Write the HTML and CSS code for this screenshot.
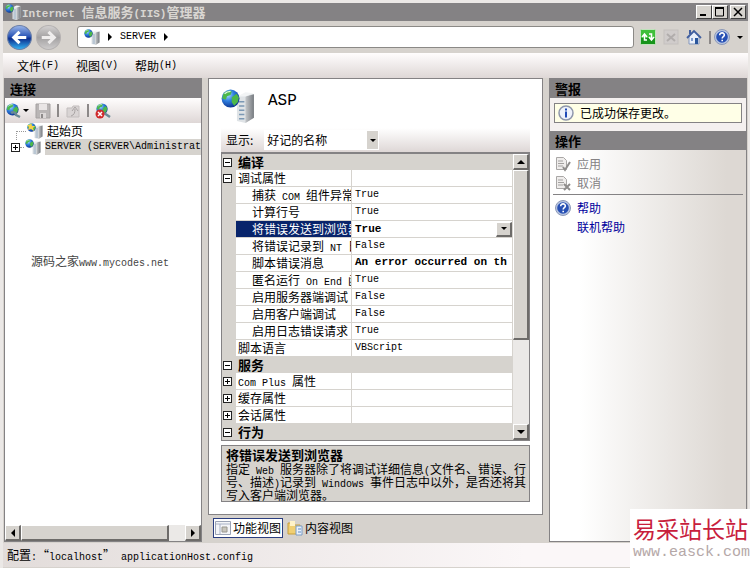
FILE: index.html
```html
<!DOCTYPE html>
<html lang="zh-CN">
<head>
  <meta charset="UTF-8" />
  <title>Internet 信息服务(IIS)管理器</title>
  <link rel="stylesheet" href="styles.css">
</head>
<body>
  <!-- 公用图标 -->
  <svg class="defs" width="0" height="0" aria-hidden="true">
    <defs>
      <radialGradient id="gGlobe" cx="35%" cy="30%" r="75%">
        <stop offset="0" stop-color="#a8ddff"/><stop offset=".45" stop-color="#2f7fe0"/><stop offset="1" stop-color="#0a2f8c"/>
      </radialGradient>
      <linearGradient id="gBlue" x1="0" y1="0" x2="0" y2="1">
        <stop offset="0" stop-color="#9db8ea"/><stop offset=".45" stop-color="#2c57b8"/><stop offset=".55" stop-color="#0d2f8e"/><stop offset="1" stop-color="#35b6f5"/>
      </linearGradient>
      <linearGradient id="gGray" x1="0" y1="0" x2="0" y2="1">
        <stop offset="0" stop-color="#d4d2d2"/><stop offset=".5" stop-color="#a3a1a2"/><stop offset="1" stop-color="#cfcdcd"/>
      </linearGradient>
      <linearGradient id="gSide" x1="0" y1="0" x2="1" y2="0">
        <stop offset="0" stop-color="#c4c7ca"/><stop offset="1" stop-color="#777b80"/>
      </linearGradient>
    </defs>
    <symbol id="globe" viewBox="0 0 16 16">
      <circle cx="8" cy="8" r="7.5" fill="url(#gGlobe)"/>
      <path d="M2 4C4 1 8 1 9 2L8 5 5 6 4 9 1 8zM9 7l4-3 2 3-1 4-3 3-2-3z" fill="#4cb84a"/>
      <path d="M3 4c2-2 4-2 5-2" stroke="#dff6e6" fill="none"/>
    </symbol>
    <symbol id="server" viewBox="0 0 32 32">
      <path d="M15 8l8-4 8 1v22l-8 5-8-2z" fill="#dfe3e6"/>
      <path d="M23 7l8-2v22l-8 5z" fill="url(#gSide)"/>
      <path d="M15 7l8-4 8 1-8 3z" fill="#f2f4f5"/>
      <path d="M17 12h5M17 16h5M17 20h5M17 24h5M17 28h5" stroke="#7b98b4" stroke-width="1.5"/>
      <use href="#globe" x="0" y="0" width="18" height="18"/>
    </symbol>
    <symbol id="help" viewBox="0 0 16 16">
      <circle cx="8" cy="8" r="7.5" fill="#b9c6e2" stroke="#8b98b8"/>
      <circle cx="8" cy="8" r="5.8" fill="#2750b4"/>
      <path d="M5.7 6.2C5.7 3 10.6 3.3 10.3 6.2 10.2 7.6 8.2 7.7 8.2 9.4M8.2 10.8v1.5" stroke="#fff" stroke-width="1.6" fill="none"/>
    </symbol>
    <symbol id="sheet" viewBox="0 0 16 16">
      <path d="M1.5 1.5h7l3 3v9h-10z" fill="#efedec" stroke="#a9a7a6"/>
      <path d="M3 5h5M3 7.5h6M3 10h5" stroke="#a3a1a0"/>
    </symbol>
  </svg>

  <div class="window">
    <header class="titlebar">
      <svg class="icon16"><use href="#server"/></svg>
      <h1><span class="en-title">Internet </span>信息服务<span class="en-title">(IIS)</span>管理器</h1>
      <div class="win-buttons">
        <button aria-label="最小化"><svg viewBox="0 0 12 10"><path d="M2 8h6" stroke="#000" stroke-width="2"/></svg></button>
        <button aria-label="最大化"><svg viewBox="0 0 12 10"><path d="M1.5 1v8h8V1" stroke="#000" fill="none"/><path d="M1 1h9" stroke="#000" stroke-width="2"/></svg></button>
        <button class="close" aria-label="关闭"><svg viewBox="0 0 12 10"><path d="M2 1l8 8M10 1L2 9" stroke="#000" stroke-width="1.5"/></svg></button>
      </div>
    </header>

    <nav class="navbar">
      <button class="round" aria-label="后退">
        <svg viewBox="0 0 24 24"><circle cx="12" cy="12" r="11.5" fill="url(#gBlue)" stroke="#6b7fa8"/><path d="M18.5 12H7M12 6.5L6.500 12l5.500 5.500" stroke="#fff" stroke-width="3" fill="none"/></svg>
      </button>
      <button class="round" aria-label="前进" disabled>
        <svg viewBox="0 0 24 24"><circle cx="12" cy="12" r="11.5" fill="url(#gGray)" stroke="#b5b2b2"/><path d="M5.5 12H17M12 6.5l5.500 5.500-5.500 5.500" stroke="#efeded" stroke-width="3" fill="none"/></svg>
      </button>
      <div class="address">
        <svg class="icon16"><use href="#server"/></svg>
        <i class="tri"></i><span class="en">SERVER</span><i class="tri"></i>
      </div>
      <div class="nav-tools">
        <button aria-label="刷新"><svg class="icon16" viewBox="0 0 16 16"><rect x=".5" y=".5" width="15" height="15" rx="1" fill="#3fbf3a" stroke="#bfe3bb"/><path d="M1 9h14v6H1z" fill="#17941b"/><path d="M7 11H4.500V6M2 8l2.500-3L7 8M9 5h2.500v5M9 8l2.500 3L14 8" stroke="#fff" stroke-width="1.5" fill="none"/></svg></button>
        <button aria-label="停止" disabled><svg class="icon16" viewBox="0 0 16 16"><rect x="1" y="1" width="14" height="14" fill="#d0cccb" stroke="#c4c0be"/><path d="M4 5l8 7M12 5l-8 7" stroke="#b1adac" stroke-width="2"/></svg></button>
        <button aria-label="主页"><svg class="icon16" viewBox="0 0 16 16"><path d="M3 7l5-5 5 5v8H3z" fill="#eaf0fa" stroke="#8497bd"/><path d="M1 9l7-7 7 7" stroke="#415f9f" stroke-width="1.8" fill="none"/><path d="M3 1h2v4H3z" fill="#415f9f"/><path d="M9 9h3v6H9z" fill="#2a569c"/><path d="M5 9h2v3H5z" fill="#7e9bd0"/></svg></button>
        <i class="sep"></i>
        <button aria-label="帮助"><svg class="icon16"><use href="#help"/></svg></button>
        <i class="caret"></i>
      </div>
    </nav>

    <div class="menubar">
      <button>文件<span class="en">(F)</span></button>
      <button>视图<span class="en">(V)</span></button>
      <button>帮助<span class="en">(H)</span></button>
    </div>

    <main class="columns">
      <section class="panel left">
        <h2>连接</h2>
        <div class="tree-tools">
          <button aria-label="连接"><svg class="icon16" viewBox="0 0 16 16"><use href="#globe" width="13" height="13"/><path d="M5 10c3-2 5 0 5 2l4 2" stroke="#6c8996" stroke-width="2.5" fill="none"/></svg></button>
          <i class="caret"></i>
          <button aria-label="保存" disabled><svg class="icon16" viewBox="0 0 16 16"><path d="M1 1h14v14H1z" fill="#b9b5b5" stroke="#a5a1a1"/><path d="M4 1h8v6H4z" fill="#e9e5e5"/><path d="M5 10h6v5H5z" fill="#dcd8d8"/><path d="M6 11h2v4H6z" fill="#8e8a8a"/></svg></button>
          <i class="sep"></i>
          <button aria-label="向上" disabled><svg class="icon16" viewBox="0 0 16 16"><path d="M2 5h5l1-2h6v11H2z" fill="#d9d4d4" stroke="#c2bdbd"/><path d="M6 13c3-1 4-3 4-7M7 8l3-4 3 4" stroke="#a8a3a3" fill="none"/></svg></button>
          <i class="sep"></i>
          <button aria-label="断开连接"><svg class="icon16" viewBox="0 0 16 16"><use href="#globe" x="1" width="12" height="12"/><path d="M9 10l6 4" stroke="#6c8996" stroke-width="2.5"/><circle cx="5" cy="11" r="4.5" fill="#d02a2c"/><path d="M3 9l4 4M7 9l-4 4" stroke="#fff" stroke-width="1.5"/></svg></button>
        </div>
        <div class="tree">
          <div class="node first">
            <i class="dots"></i>
            <svg class="icon16" viewBox="0 0 16 16"><use href="#server" width="16" height="16"/><path d="M4 0l1 3 3 0-2 2 1 3-3-2-3 1 1-3-2-2h3z" fill="#f6d04a"/></svg>
            <span class="node-text">起始页</span>
          </div>
          <div class="node">
            <button class="box plus" aria-label="展开"></button>
            <i class="dash"></i>
            <svg class="icon16"><use href="#server"/></svg>
            <span class="node-text selected en">SERVER (SERVER\Administrat</span>
          </div>
          <p class="source">源码之家<span class="en">www.mycodes.net</span></p>
        </div>
        <div class="hscroll">
          <button aria-label="向左滚动"><i class="arrow-left"></i></button>
          <div class="thumb"></div>
          <div class="track"></div>
          <button aria-label="向右滚动"><i class="arrow-right"></i></button>
        </div>
      </section>

      <section class="middle">
        <div class="feature">
          <div class="feature-title">
            <svg class="icon32"><use href="#server"/></svg>
            <h2>ASP</h2>
          </div>
          <div class="display-row">
            <label for="display">显示:</label>
            <div class="select-wrap">
              <select id="display"><option>好记的名称</option></select>
              <span class="select-arrow"><i class="caret"></i></span>
            </div>
          </div>

          <div class="grid">
            <table>
              <colgroup><col class="c-gutter"><col class="c-name"><col></colgroup>
              <tbody>
                <tr class="cat"><td><button class="box" aria-label="折叠"></button></td><th colspan="2">编译</th></tr>
                <tr><td><button class="box" aria-label="折叠"></button></td><th>调试属性</th><td></td></tr>
                <tr class="sub"><td></td><th>捕获<span class="en"> COM </span>组件异常</th><td>True</td></tr>
                <tr class="sub"><td></td><th>计算行号</th><td>True</td></tr>
                <tr class="sub current"><td></td><th>将错误发送到浏览器</th><td><div class="value"><b>True</b><button class="drop" aria-label="选择值"><i class="caret"></i></button></div></td></tr>
                <tr class="sub"><td></td><th>将错误记录到<span class="en"> NT </span>日志</th><td>False</td></tr>
                <tr class="sub"><td></td><th>脚本错误消息</th><td><b>An error occurred on th</b></td></tr>
                <tr class="sub"><td></td><th>匿名运行<span class="en"> On End </span>函数</th><td>True</td></tr>
                <tr class="sub"><td></td><th>启用服务器端调试</th><td>False</td></tr>
                <tr class="sub"><td></td><th>启用客户端调试</th><td>False</td></tr>
                <tr class="sub"><td></td><th>启用日志错误请求</th><td>True</td></tr>
                <tr><td></td><th>脚本语言</th><td>VBScript</td></tr>
                <tr class="cat"><td><button class="box" aria-label="折叠"></button></td><th colspan="2">服务</th></tr>
                <tr><td><button class="box plus" aria-label="展开"></button></td><th><span class="en">Com Plus </span>属性</th><td></td></tr>
                <tr><td><button class="box plus" aria-label="展开"></button></td><th>缓存属性</th><td></td></tr>
                <tr><td><button class="box plus" aria-label="展开"></button></td><th>会话属性</th><td></td></tr>
                <tr class="cat"><td><button class="box" aria-label="折叠"></button></td><th colspan="2">行为</th></tr>
              </tbody>
            </table>
            <div class="vscroll">
              <button aria-label="向上滚动"><i class="arrow-up"></i></button>
              <div class="thumb"></div>
              <div class="track"></div>
              <button aria-label="向下滚动"><i class="arrow-down"></i></button>
            </div>
          </div>

          <div class="desc">
            <h3>将错误发送到浏览器</h3>
            <p>指定<span class="en"> Web </span>服务器除了将调试详细信息<span class="en">(</span>文件名、错误、行<br>号、描述<span class="en">)</span>记录到<span class="en"> Windows </span>事件日志中以外，是否还将其<br>写入客户端浏览器。</p>
          </div>
        </div>

        <div class="views">
          <button class="active">
            <svg class="icon16" viewBox="0 0 16 16"><path d="M.5 1.5h15v13H.5z" fill="#f4f5f8" stroke="#9ba3b5"/><path d="M1 4h14M5 4v10" stroke="#a9b2c6"/><path d="M7 7h5v5H7z" fill="#c9c6bd" stroke="#98968e"/></svg>功能视图
          </button>
          <button>
            <svg class="icon16" viewBox="0 0 16 16"><path d="M1 3h5l1 2h6v9H1z" fill="#f0cf73" stroke="#c79f3d"/><path d="M3 1h5v5H3z" fill="#fff3c9"/><path d="M9 6h6v9H9z" fill="#e9f1fb" stroke="#7b9cc7"/><path d="M11 9h3M11 12h3" stroke="#5f8bc4"/></svg>内容视图
          </button>
        </div>
      </section>

      <aside class="panel right">
        <h2>警报</h2>
        <div class="alert-area">
          <div class="alert">
            <svg class="icon16" viewBox="0 0 16 16"><circle cx="8" cy="8" r="7" fill="#eef2fa" stroke="#8e96ab" stroke-width="1.5"/><path d="M8 3.5v2M8 6.5v6" stroke="#1f49b6" stroke-width="2"/></svg>已成功保存更改。
          </div>
        </div>
        <h2>操作</h2>
        <div class="actions">
          <button disabled><svg class="icon16" viewBox="0 0 16 16"><use href="#sheet" width="16" height="16"/><path d="M8 11l2 3 5-8" stroke="#8f8d8c" stroke-width="2" fill="none"/></svg>应用</button>
          <button disabled><svg class="icon16" viewBox="0 0 16 16"><use href="#sheet" width="16" height="16"/><path d="M9 9l6 6M15 9l-6 6" stroke="#8f8d8c" stroke-width="2"/></svg>取消</button>
          <hr>
          <a href="#help-page"><svg class="icon16"><use href="#help"/></svg>帮助</a>
          <a href="#online-help" class="no-icon">联机帮助</a>
        </div>
      </aside>
    </main>

    <footer class="status">配置<span class="en">:</span>“<span class="en">localhost</span>”<span class="en"> applicationHost.config</span></footer>
  </div>

  <div class="watermark">
    <strong>易采站长站</strong>
    <span>www.easck.com</span>
  </div>
</body>
</html>
```
FILE: styles.css
```css
* { box-sizing: border-box; }
body {
  margin: 0;
  position: relative;
  min-height: 100vh;
  display: flex;
  background: #d6d2cd;
  color: #000;
  font: 12px/16px "Noto Sans CJK SC", sans-serif;
}
h1, h2, h3, p { margin: 0; }
button {
  margin: 0;
  padding: 0;
  border: 0;
  background: none;
  color: inherit;
  font: inherit;
  display: flex;
  align-items: center;
  justify-content: center;
}
svg { display: block; flex: none; }
.defs { position: absolute; }
.icon16 { width: 16px; height: 16px; }
.icon32 { width: 34px; height: 34px; }
.en { font-family: "Liberation Mono", monospace; font-size: 10px; line-height: 8px; white-space: pre; }

.window {
  flex: 1;
  min-width: 0;
  display: flex;
  flex-direction: column;
  border: solid #ebe8e6;
  border-width: 3px 2px 0 3px;
  padding-bottom: 2px;
}

/* 标题栏 */
.titlebar {
  display: flex;
  align-items: center;
  height: 18px;
  padding: 0 2px;
  background: #848284;
  color: #d9d6d2;
}
.titlebar h1 { flex: 1; padding-left: 1px; font-size: 13px; line-height: 18px; }
.en-title { font-family: "Liberation Mono", monospace; font-size: 11px; line-height: 8px; white-space: pre; }
.win-buttons { display: flex; }
.win-buttons button {
  width: 16px;
  height: 14px;
  background: #d6d3ce;
  border: 1px solid;
  border-color: #fff #404040 #404040 #fff;
}
.win-buttons svg { width: 12px; height: 10px; }
.win-buttons .close { margin-left: 2px; }

/* 地址栏 */
.navbar {
  display: flex;
  align-items: center;
  gap: 4px;
  height: 32px;
  padding: 0 5px 0 4px;
}
.round svg { width: 25px; height: 25px; }
.address {
  flex: 1;
  display: flex;
  align-items: center;
  gap: 8px;
  height: 22px;
  margin-left: 12px;
  padding-left: 6px;
  background: #fff;
  border: 1px solid #8b8986;
  border-radius: 3px;
}
.tri { border: solid transparent; border-width: 4px 0 4px 4px; border-left-color: #000; }
.caret { border: solid transparent; border-width: 3px 3px 0; border-top-color: #000; }
.sep { width: 2px; height: 13px; background: #8c8888; }
.nav-tools { display: flex; align-items: center; gap: 7px; padding-left: 2px; }
.nav-tools .sep { margin-right: -4px; }

.menubar {
  display: flex;
  gap: 17px;
  height: 25px;
  padding: 0 14px;
  background: linear-gradient(#fffdfd, #ded7d6);
}

/* 三栏 */
.columns { flex: 1; display: flex; gap: 6px; padding: 0 1px; }
.panel { flex: none; width: 198px; display: flex; flex-direction: column; border: 1px solid #848284; }
.panel h2 {
  height: 19px;
  padding-left: 5px;
  background: #848284;
  font-size: 13px;
  line-height: 19px;
}
.tree-tools {
  display: flex;
  align-items: center;
  gap: 6px;
  height: 25px;
  padding: 0 1px;
  background: linear-gradient(#fffdfd, #ded7d6);
}
.tree-tools .caret { margin-left: -5px; }
.tree { flex: 1; background: #fff; overflow: hidden; }
.node { display: flex; align-items: center; height: 16px; padding-left: 6px; }
.node .icon16 { margin: 0 4px 0 1px; }
.dots { width: 10px; height: 9px; margin: 8px 0 0 6px; border: dotted #999; border-width: 1px 0 0 1px; }
.dash { width: 6px; border-top: 1px dotted #999; }
.node-text { white-space: pre; }
.node-text.selected { background: #d6d3ce; line-height: 16px; }
.source { padding: 98px 0 0 26px; color: #444; }
.box {
  flex: none;
  width: 9px;
  height: 9px;
  border: 1px solid #222;
  background: linear-gradient(#000, #000) center / 5px 1px no-repeat #fff;
}
.box.plus {
  background: linear-gradient(#000, #000) center / 5px 1px no-repeat,
    linear-gradient(#000, #000) center / 1px 5px no-repeat #fff;
}
.first { padding-left: 5px; }

/* 滚动条 */
.hscroll, .vscroll { flex: none; display: flex; background: #ebe9e7; }
.hscroll { height: 16px; }
.vscroll { width: 16px; flex-direction: column; }
.hscroll button, .vscroll button, .thumb, .drop {
  background: #d6d3ce;
  border: solid;
  border-width: 1px 2px 2px 1px;
  border-color: #fff #6d6b69 #6d6b69 #fff;
}
.hscroll button { width: 16px; }
.vscroll button { height: 16px; }
.hscroll .thumb { flex: 9; }
.hscroll .track { flex: 1; }
.vscroll .thumb { flex: 2; }
.vscroll .track { flex: 1; }
.arrow-left { border: solid transparent; border-width: 4px 4px 4px 0; border-right-color: #000; }
.arrow-right { border: solid transparent; border-width: 4px 0 4px 4px; border-left-color: #000; }
.arrow-up { border: solid transparent; border-width: 0 4px 4px; border-bottom-color: #000; }
.arrow-down { border: solid transparent; border-width: 4px 4px 0; border-top-color: #000; }

/* 中间功能区 */
.middle { flex: 1; min-width: 0; display: flex; flex-direction: column; }
.feature {
  flex: 1;
  display: flex;
  flex-direction: column;
  padding: 0 12px 12px;
  background: #fff;
  border: 1px solid #848284;
}
.feature-title { display: flex; gap: 13px; height: 49px; padding-top: 10px; }
.feature-title h2 { font: 16px/24px "Liberation Mono", monospace; }
.display-row {
  display: flex;
  align-items: center;
  gap: 11px;
  height: 24px;
  padding-left: 5px;
  background: linear-gradient(#fff, #ded7d6);
}
.select-wrap { display: flex; align-items: center; width: 115px; height: 20px; background: #fff; }
select {
  appearance: none;
  flex: 1;
  min-width: 0;
  padding: 0 3px;
  border: 0;
  background: #fff;
  color: #000;
  font: inherit;
}
.select-arrow { display: flex; align-items: center; justify-content: center; width: 11px; height: 18px; margin-right: 1px; background: #d6d3ce; }
.grid { display: flex; border: 1px solid #848284; border-top-width: 2px; background: #d6d3ce; }
table { flex: 1; width: 0; table-layout: fixed; border-collapse: separate; border-spacing: 0; }
.c-gutter { width: 14px; }
.c-name { width: 116px; }
tr { height: 17px; }
td, th {
  padding: 0 0 0 3px;
  overflow: hidden;
  white-space: nowrap;
  text-align: left;
  font-weight: normal;
  line-height: 16px;
  background: #fff;
  border: solid #d6d3ce;
  border-width: 0 1px 1px 0;
}
th { padding-left: 2px; }
td:first-child { padding-left: 1px; background: #d6d3ce; border: 0; }
td { font-family: "Liberation Mono", monospace; font-size: 10px; }
td b { font-size: 11px; line-height: 8px; }
.cat { height: 16px; }
.cat th { background: #d6d3ce; border: 0; font-size: 13px; font-weight: bold; }
.sub th { padding-left: 16px; }
.current th {
  background: #08246b;
  color: #fff;
}
.value { display: flex; align-items: center; justify-content: space-between; height: 16px; }
.drop { width: 16px; height: 15px; }

.desc { flex: 1; margin-top: 4px; padding: 0 4px; background: #d6d3ce; border: 1px solid #848284; }
.desc h3 { font-size: 13px; line-height: 17px; }
.desc p { line-height: 12px; white-space: nowrap; }

.views { display: flex; gap: 2px; padding: 3px 5px 4px; }
.views button { gap: 2px; height: 20px; padding: 0 1px; border: 1px solid transparent; }
.views .active { background: #fff; border: 1px solid #2b3e80; }

/* 右侧 */
.alert-area { padding: 5px 4px 8px; background: #f4f0ef; }
.alert {
  display: flex;
  align-items: center;
  gap: 6px;
  height: 20px;
  padding-left: 3px;
  background: #ffffe7;
  border: 1px solid #848284;
}
.actions {
  flex: 1;
  padding: 4px 3px;
  background: linear-gradient(90deg, #fff 15%, #ddd8d3 90%);
}
.actions button, .actions a {
  display: flex;
  align-items: center;
  gap: 6px;
  height: 19px;
  padding-left: 2px;
}
.actions button { color: #848284; }
.actions a { color: #00009c; text-decoration: none; }
.actions .no-icon { padding-left: 24px; }
.actions hr { margin: 2px 0 3px; border: 0; border-top: 1px solid #848284; }

.status {
  height: 24px;
  margin-top: 1px;
  padding-left: 4px;
  line-height: 24px;
  background: linear-gradient(90deg, #e2dcda, #fbf7f8 70%);
}

/* 右下角站点标记 */
.watermark {
  position: absolute;
  right: 0;
  bottom: 0;
  display: flex;
  flex-direction: column;
  width: 120px;
  height: 60px;
  padding: 4px 0 0 3px;
  background: #fff;
}
.watermark strong { color: #c8203c; font-size: 23px; line-height: 30px; font-weight: normal; }
.watermark span { color: #b5a8a8; font: 15px/20px "Liberation Mono", monospace; }
```
